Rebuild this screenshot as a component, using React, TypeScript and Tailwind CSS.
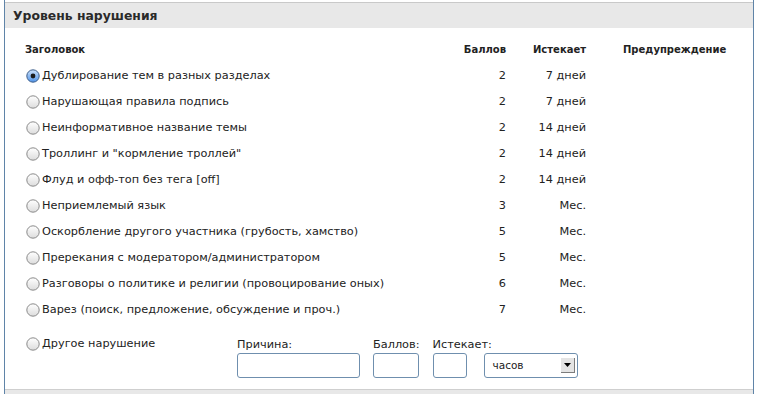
import React from "react";

type Row = { title: string; points: number; expires: string };

const rows: Row[] = [
  { title: "Дублирование тем в разных разделах", points: 2, expires: "7 дней" },
  { title: "Нарушающая правила подпись", points: 2, expires: "7 дней" },
  { title: "Неинформативное название темы", points: 2, expires: "14 дней" },
  { title: "Троллинг и \"кормление троллей\"", points: 2, expires: "14 дней" },
  { title: "Флуд и офф-топ без тега [off]", points: 2, expires: "14 дней" },
  { title: "Неприемлемый язык", points: 3, expires: "Мес." },
  { title: "Оскорбление другого участника (грубость, хамство)", points: 5, expires: "Мес." },
  { title: "Пререкания с модератором/администратором", points: 5, expires: "Мес." },
  { title: "Разговоры о политике и религии (провоцирование оных)", points: 6, expires: "Мес." },
  { title: "Варез (поиск, предложение, обсуждение и проч.)", points: 7, expires: "Мес." },
];

function Radio({ checked }: { checked?: boolean }) {
  return (
    <svg width="14" height="14" viewBox="0 0 14 14" className="shrink-0">
      <defs>
        <linearGradient id={checked ? "rc" : "ru"} x1="0" y1="0" x2="0" y2="1">
          {checked ? (
            <>
              <stop offset="0" stopColor="#cfe3fb" />
              <stop offset="1" stopColor="#4f93e8" />
            </>
          ) : (
            <>
              <stop offset="0" stopColor="#ffffff" />
              <stop offset="1" stopColor="#dcdcdc" />
            </>
          )}
        </linearGradient>
      </defs>
      <circle
        cx="7"
        cy="7"
        r="6.2"
        fill={`url(#${checked ? "rc" : "ru"})`}
        stroke={checked ? "#3f5f8a" : "#8a8a8a"}
        strokeWidth="1"
      />
      {checked && <circle cx="7" cy="7" r="2.4" fill="#1b1b1b" />}
    </svg>
  );
}

export default function App() {
  return (
    <div
      className="w-[761px] h-[394px] bg-white overflow-hidden text-[#222]"
      style={{ fontFamily: '"DejaVu Sans", Verdana, sans-serif' }}
    >
      <div className="ml-[4px] w-[750px] h-[394px] border-l border-r border-[#5f84a8] flex flex-col">
        <div className="mt-[2px] border-t border-[#c9c9c9] bg-[#e8e8e8] h-[26px] flex items-center pl-[8px]">
          <span className="text-[12.4px] font-bold text-[#2a2a2a] mt-[1px]">Уровень нарушения</span>
        </div>

        <div className="mt-[8px] flex h-[27px] items-center text-[10px] font-bold">
          <div className="w-[426px] pl-[20px]">Заголовок</div>
          <div className="w-[75px] text-right">Баллов</div>
          <div className="w-[80px] text-right">Истекает</div>
          <div className="pl-[37px]">Предупреждение</div>
        </div>

        {rows.map((r, i) => (
          <div key={i} className="flex h-[26px] items-center text-[11.3px]">
            <div className="w-[426px] pl-[21px] flex items-center gap-[2px]">
              <Radio checked={i === 0} />
              <span>{r.title}</span>
            </div>
            <div className="w-[75px] text-right">{r.points}</div>
            <div className="w-[80px] text-right">{r.expires}</div>
          </div>
        ))}

        <div className="mt-[10px] flex text-[11.3px]">
          <div className="w-[232px] pl-[21px] flex items-center gap-[2px] h-[20px] mt-[1px]">
            <Radio />
            <span>Другое нарушение</span>
          </div>
          <div className="flex flex-col mr-[13px]">
            <span className="h-[17px] leading-[17px] mt-[3px]">Причина:</span>
            <input className="w-[123px] h-[25px] border border-[#6f8fae] rounded-[3px] outline-none" />
          </div>
          <div className="flex flex-col mr-[14px]">
            <span className="h-[17px] leading-[17px] mt-[3px]">Баллов:</span>
            <input className="w-[46px] h-[25px] border border-[#6f8fae] rounded-[3px] outline-none" />
          </div>
          <div className="flex flex-col -ml-[1px]">
            <span className="h-[17px] leading-[17px] mt-[3px]">Истекает:</span>
            <div className="flex gap-[17px]">
              <input className="w-[34px] h-[25px] border border-[#6f8fae] rounded-[3px] outline-none" />
              <div className="w-[94px] h-[25px] border border-[#6f8fae] rounded-[3px] flex items-center pl-[8px] pr-[2px] text-[10.5px] bg-white">
                <span className="flex-1">часов</span>
                <div className="w-[14px] h-[15px] bg-[#e4e4e4] border-r border-b border-[#7c7c7c] flex items-center justify-center">
                  <svg width="7" height="4" viewBox="0 0 7 4">
                    <path d="M0 0 L7 0 L3.5 4 Z" fill="#000" />
                  </svg>
                </div>
              </div>
            </div>
          </div>
        </div>

        <div className="mt-auto border-t border-[#cfcfcf] bg-[#e8e8e8] h-[5px]" />
      </div>
    </div>
  );
}
